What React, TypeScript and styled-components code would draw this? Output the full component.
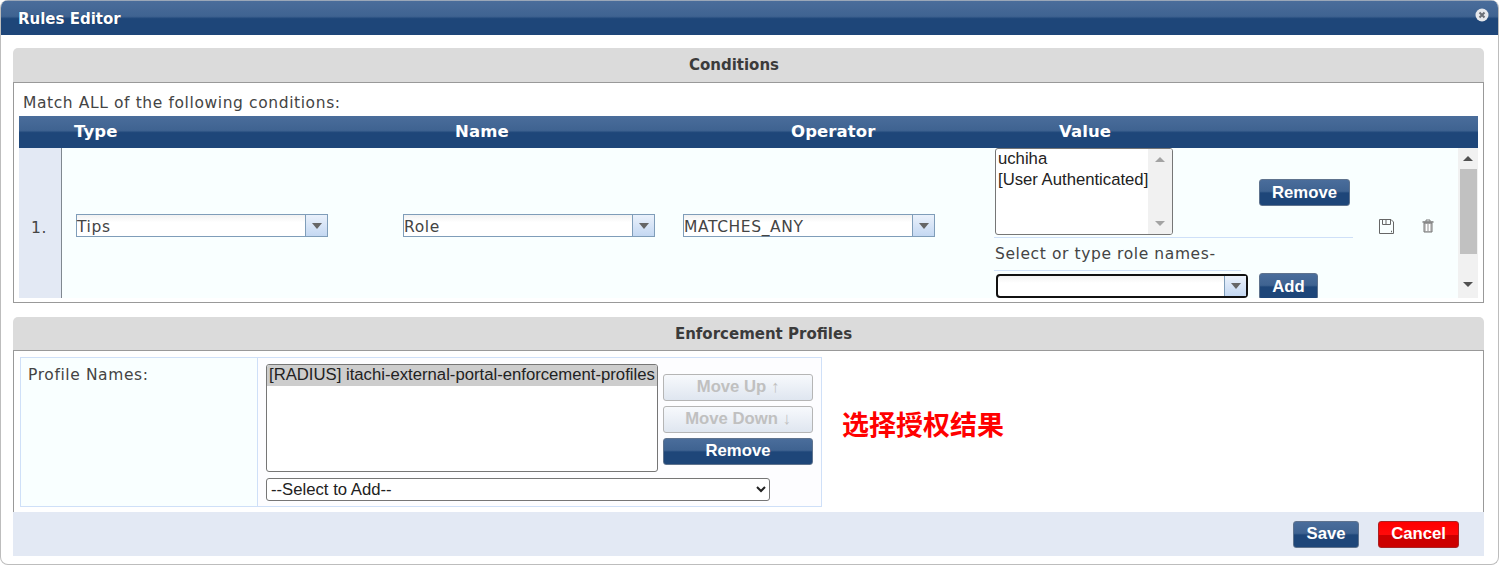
import React from "react";
import styled, { createGlobalStyle, css } from "styled-components";

const NAVY_GRADIENT = "linear-gradient(to bottom, #4a6d9b 0%, #3f6391 45%, #1e4679 52%, #1e4679 100%)";

const GlobalStyle = createGlobalStyle`
  html, body { margin: 0; padding: 0; background: #fff; }
  body { font-family: "DejaVu Sans", sans-serif; color: #444; overflow: hidden; }
`;

// Verdana-like body text, the page's regular label style
const labelText = css`
  font-size: 15.5px;
  letter-spacing: 0.6px;
`;

const Dialog = styled.div`
  width: 1499px;
  height: 565px;
  box-sizing: border-box;
  background: #fff;
  border: 1px solid #bdbdbd;
  border-top: 0;
  border-radius: 8px;
  overflow: hidden;
`;

const TitleBar = styled.div`
  height: 35px;
  box-sizing: border-box;
  padding: 0 9px 0 17px;
  display: flex;
  justify-content: space-between;
  align-items: flex-start;
  background: ${NAVY_GRADIENT};
  border-top: 1px solid #9aa7b8;
`;

const TitleText = styled.div`
  font-weight: bold;
  font-size: 15px;
  line-height: 37px;
  color: #fff;
  text-shadow: 0 0 1px #102b50;
`;

const CloseIcon = () => (
  <svg width="14" height="14" viewBox="0 0 14 14" style={{ marginTop: 7 }}>
    <circle cx="7" cy="7" r="6.5" fill="#e6e8ec" />
    <path d="M4.5 4.5 9.5 9.5M9.5 4.5 4.5 9.5" stroke="#6b6f76" strokeWidth="2" />
  </svg>
);

const Content = styled.div`
  padding: 13px 14px 0 12px;
`;

const SectionHeader = styled.div<{ $height: number; $offset: number }>`
  height: ${(p) => p.$height}px;
  box-sizing: border-box;
  background: #dbdbdb;
  border-radius: 5px 5px 0 0;
  border-bottom: 1px solid #999;
  text-align: center;
  font-weight: bold;
  font-size: 15px;
  line-height: 34px;
  color: #3b3b3b;
  padding-left: ${(p) => Math.max(p.$offset, 0)}px;
  padding-right: ${(p) => Math.max(-p.$offset, 0)}px;
`;

const ConditionsBody = styled.div`
  height: 220px;
  box-sizing: border-box;
  border: 1px solid #999;
  border-top: 0;
  padding: 0 5px;
  margin-bottom: 14px;
`;

const MatchLine = styled.div`
  height: 33px;
  padding: 10px 0 0 4px;
  box-sizing: border-box;
  ${labelText}
  line-height: 20px;
`;

const HeaderRow = styled.div`
  height: 32px;
  display: grid;
  grid-template-columns: 55px 381px 336px 268px 1fr;
  background: ${NAVY_GRADIENT};
  color: #fff;
  font-weight: bold;
  font-size: 16.5px;
  letter-spacing: 0.1px;
  line-height: 32px;
`;

const ConditionRow = styled.div`
  height: 150px;
  display: grid;
  grid-template-columns: 43px 327px 280px 312px 389px 87px 1fr;
  background: #f9ffff;
  overflow: hidden;
`;

const RowNumber = styled.div`
  background: #e3e9f4;
  border-right: 1px solid #808890;
  display: flex;
  align-items: center;
  padding-left: 12px;
  padding-top: 8px;
  box-sizing: border-box;
  ${labelText}
`;

const SelectCell = styled.div`
  padding: 66px 0 0 14px;
`;

const ComboBox = styled.div<{ $focused?: boolean }>`
  width: 252px;
  height: ${(p) => (p.$focused ? "24px" : "23px")};
  flex: none;
  box-sizing: border-box;
  display: flex;
  background: linear-gradient(to bottom, #f2f2f2 0%, #fff 35%);
  border: ${(p) => (p.$focused ? "2px solid #111" : "1px solid #7f9db9")};
  border-radius: ${(p) => (p.$focused ? "4px" : "0")};
  margin-top: ${(p) => (p.$focused ? "1px" : "0")};
`;

const ComboText = styled.div`
  flex: 1;
  ${labelText}
  line-height: 24px;
  color: #444;
`;

const ComboArrow = styled.div`
  width: 21px;
  display: flex;
  align-items: center;
  justify-content: center;
  background: linear-gradient(to bottom, #eaf1fb, #c4d8f2);
  border-left: 1px solid #7f9db9;
  &::after {
    content: "";
    border-left: 5px solid transparent;
    border-right: 5px solid transparent;
    border-top: 6px solid #666;
  }
`;

const ValueCell = styled.div`
  padding-left: 13px;
`;

const ValueTop = styled.div`
  width: 359px;
  height: 90px;
  box-sizing: border-box;
  border-bottom: 1px solid #cfe0f8;
  padding-left: 1px;
  display: flex;
  align-items: flex-start;
`;

const ListBox = styled.div<{ $width: number; $height: number }>`
  width: ${(p) => p.$width}px;
  height: ${(p) => p.$height}px;
  flex: none;
  box-sizing: border-box;
  border: 1px solid #767676;
  border-radius: 3px;
  background: #fff;
  display: flex;
  font-family: "Liberation Sans", sans-serif;
  font-size: 16.7px;
  line-height: 21px;
  color: #222;
  overflow: hidden;
`;

const ProfileList = styled(ListBox)`
  display: block;
`;

const ListItems = styled.div`
  flex: 1;
  min-width: 0;
  white-space: nowrap;
  padding-left: 2px;
  margin-top: -1px;
`;

const ListScroll = styled.div`
  width: 24px;
  background: #f1f1f1;
  display: flex;
  flex-direction: column;
  justify-content: space-between;
  align-items: center;
  padding: 8px 0;
  box-sizing: border-box;
`;

const Arrow = styled.div<{ $down?: boolean; $dark?: boolean }>`
  width: 0;
  height: 0;
  border-left: 5px solid transparent;
  border-right: 5px solid transparent;
  ${(p) =>
    p.$down
      ? `border-top: 5px solid ${p.$dark ? "#505050" : "#a3a3a3"};`
      : `border-bottom: 5px solid ${p.$dark ? "#505050" : "#a3a3a3"};`}
`;

const NavyButton = styled.button<{ $width: number; $variant?: "navy" | "red" | "disabled" }>`
  width: ${(p) => p.$width}px;
  height: 27px;
  flex: none;
  padding: 0 0 2px;
  box-sizing: border-box;
  font-family: "Liberation Sans", sans-serif;
  font-weight: bold;
  font-size: 16.7px;
  border-radius: 3px;
  ${(p) =>
    p.$variant === "red"
      ? `background: linear-gradient(to bottom, #ff0000 0%, #ff0a0a 50%, #cc0000 52%, #cc0000 100%);
         color: #fff; border: 1px solid #aa2222;`
      : p.$variant === "disabled"
        ? `background: linear-gradient(to bottom, #f7f9fc, #dfe6f0);
           color: #c0c0c0; border: 1px solid #b5b5b5;`
        : `background: ${NAVY_GRADIENT}; color: #fff; border: 1px solid #5f738e;`}
`;

const RowButton = styled(NavyButton)`
  padding: 0;
`;

const RemoveSlot = styled.div`
  margin: 31px 0 0 86px;
`;

const RoleHint = styled.div`
  width: 247px;
  height: 33px;
  box-sizing: border-box;
  border-bottom: 1px solid #cfe0f8;
  ${labelText}
  line-height: 33px;
  text-indent: 1px;
  white-space: nowrap;
`;

const AddRow = styled.div`
  display: flex;
  align-items: flex-start;
  padding: 2px 0 0 2px;
  gap: 11px;
`;

const RowActions = styled.div`
  display: flex;
  align-items: center;
  gap: 27px;
  padding: 4px 0 0 8px;
`;

const SaveIcon = () => (
  <svg width="17" height="17" viewBox="0 0 17 17" fill="none" stroke="#666" strokeWidth="1">
    <path d="M1.5 1.5H13L15.5 4V15.5H1.5Z" />
    <path d="M4.5 1.5V6.5H12.5V1.5M8 2V6" />
    <path d="M13 13.5h1" strokeWidth="1.4" />
  </svg>
);

const TrashIcon = () => (
  <svg width="12" height="14" viewBox="0 0 12 14" fill="none" stroke="#777" strokeWidth="1">
    <path d="M0.5 3H11.5" strokeWidth="1.5" />
    <path d="M4 2.5V1H8V2.5" />
    <path d="M2 4V13H10V4Z" fill="#c8c8c8" />
    <path d="M4.5 5V12M7.5 5V12" stroke="#fff" />
  </svg>
);

const RowScrollbar = styled.div`
  background: #f1f1f1;
  display: flex;
  flex-direction: column;
  align-items: center;
  padding-top: 8px;
  width: 20px;
  justify-self: end;
`;

const Thumb = styled.div`
  width: 17px;
  height: 85px;
  margin: 8px 0 28px;
  background: #c1c1c1;
`;

const EnforcementBody = styled.div`
  height: 161px;
  box-sizing: border-box;
  border-left: 1px solid #999;
  border-right: 1px solid #999;
  padding: 6px 0 0 6px;
  display: flex;
  align-items: flex-start;
`;

const ProfileTable = styled.div`
  width: 802px;
  height: 150px;
  box-sizing: border-box;
  border: 1px solid #cfe0f8;
  display: grid;
  grid-template-columns: 237px 1fr;
`;

const ProfileLabel = styled.div`
  background: #f9ffff;
  border-right: 1px solid #cfe0f8;
  ${labelText}
  line-height: 20px;
  padding: 7px 0 0 7px;
`;

const ProfileValue = styled.div`
  padding: 6px 0 0 8px;
  background: #fdfdff;
`;

const ProfileTop = styled.div`
  display: flex;
  gap: 5px;
  align-items: flex-start;
`;

const SelectedItem = styled.div`
  background: #cdcdcd;
  padding-left: 2px;
  height: 21px;
  line-height: 19px;
  white-space: nowrap;
`;

const MoveButtons = styled.div`
  display: flex;
  flex-direction: column;
  gap: 5px;
  padding-top: 10px;
`;

const AddSelect = styled.select`
  display: block;
  width: 504px;
  height: 23px;
  margin-top: 6px;
  box-sizing: border-box;
  border: 1px solid #767676;
  border-radius: 3px;
  background: #fff;
  font-family: "Liberation Sans", sans-serif;
  font-size: 16.7px;
  color: #222;
`;

const Annotation = styled.div`
  margin: 49px 0 0 20px;
  font-family: "Liberation Sans", "Noto Sans CJK SC", sans-serif;
  font-weight: bold;
  font-size: 27px;
  line-height: 40px;
  color: #ff0000;
`;

const Footer = styled.div`
  height: 44px;
  box-sizing: border-box;
  background: #e3e9f4;
  padding: 9px 25px 0 0;
  display: flex;
  justify-content: flex-end;
  gap: 19px;
`;

export default function App() {
  return (
    <>
      <GlobalStyle />
      <Dialog>
        <TitleBar>
          <TitleText>Rules Editor</TitleText>
          <CloseIcon />
        </TitleBar>
        <Content>
          <SectionHeader $height={35} $offset={-29}>Conditions</SectionHeader>
          <ConditionsBody>
            <MatchLine>Match ALL of the following conditions:</MatchLine>
            <HeaderRow>
              <span />
              <span>Type</span>
              <span>Name</span>
              <span>Operator</span>
              <span>Value</span>
            </HeaderRow>
            <ConditionRow>
              <RowNumber>1.</RowNumber>
              {["Tips", "Role", "MATCHES_ANY"].map((v) => (
                <SelectCell key={v}>
                  <ComboBox>
                    <ComboText>{v}</ComboText>
                    <ComboArrow />
                  </ComboBox>
                </SelectCell>
              ))}
              <ValueCell>
                <ValueTop>
                  <ListBox $width={178} $height={87}>
                    <ListItems>
                      <div>uchiha</div>
                      <div>[User Authenticated]</div>
                    </ListItems>
                    <ListScroll>
                      <Arrow />
                      <Arrow $down />
                    </ListScroll>
                  </ListBox>
                  <RemoveSlot>
                    <RowButton $width={91}>Remove</RowButton>
                  </RemoveSlot>
                </ValueTop>
                <RoleHint>Select or type role names-</RoleHint>
                <AddRow>
                  <ComboBox $focused>
                    <ComboText />
                    <ComboArrow />
                  </ComboBox>
                  <RowButton $width={59}>Add</RowButton>
                </AddRow>
              </ValueCell>
              <RowActions>
                <SaveIcon />
                <TrashIcon />
              </RowActions>
              <RowScrollbar>
                <Arrow $dark />
                <Thumb />
                <Arrow $down $dark />
              </RowScrollbar>
            </ConditionRow>
          </ConditionsBody>

          <SectionHeader $height={34} $offset={30}>Enforcement Profiles</SectionHeader>
          <EnforcementBody>
            <ProfileTable>
              <ProfileLabel>Profile Names:</ProfileLabel>
              <ProfileValue>
                <ProfileTop>
                  <ProfileList $width={392} $height={108}>
                    <SelectedItem>[RADIUS] itachi-external-portal-enforcement-profiles</SelectedItem>
                  </ProfileList>
                  <MoveButtons>
                    <NavyButton $width={150} $variant="disabled">Move Up ↑</NavyButton>
                    <NavyButton $width={150} $variant="disabled">Move Down ↓</NavyButton>
                    <NavyButton $width={150}>Remove</NavyButton>
                  </MoveButtons>
                </ProfileTop>
                <AddSelect defaultValue="add">
                  <option value="add">--Select to Add--</option>
                </AddSelect>
              </ProfileValue>
            </ProfileTable>
            <Annotation>选择授权结果</Annotation>
          </EnforcementBody>
          <Footer>
            <NavyButton $width={66}>Save</NavyButton>
            <NavyButton $width={81} $variant="red">Cancel</NavyButton>
          </Footer>
        </Content>
      </Dialog>
    </>
  );
}
